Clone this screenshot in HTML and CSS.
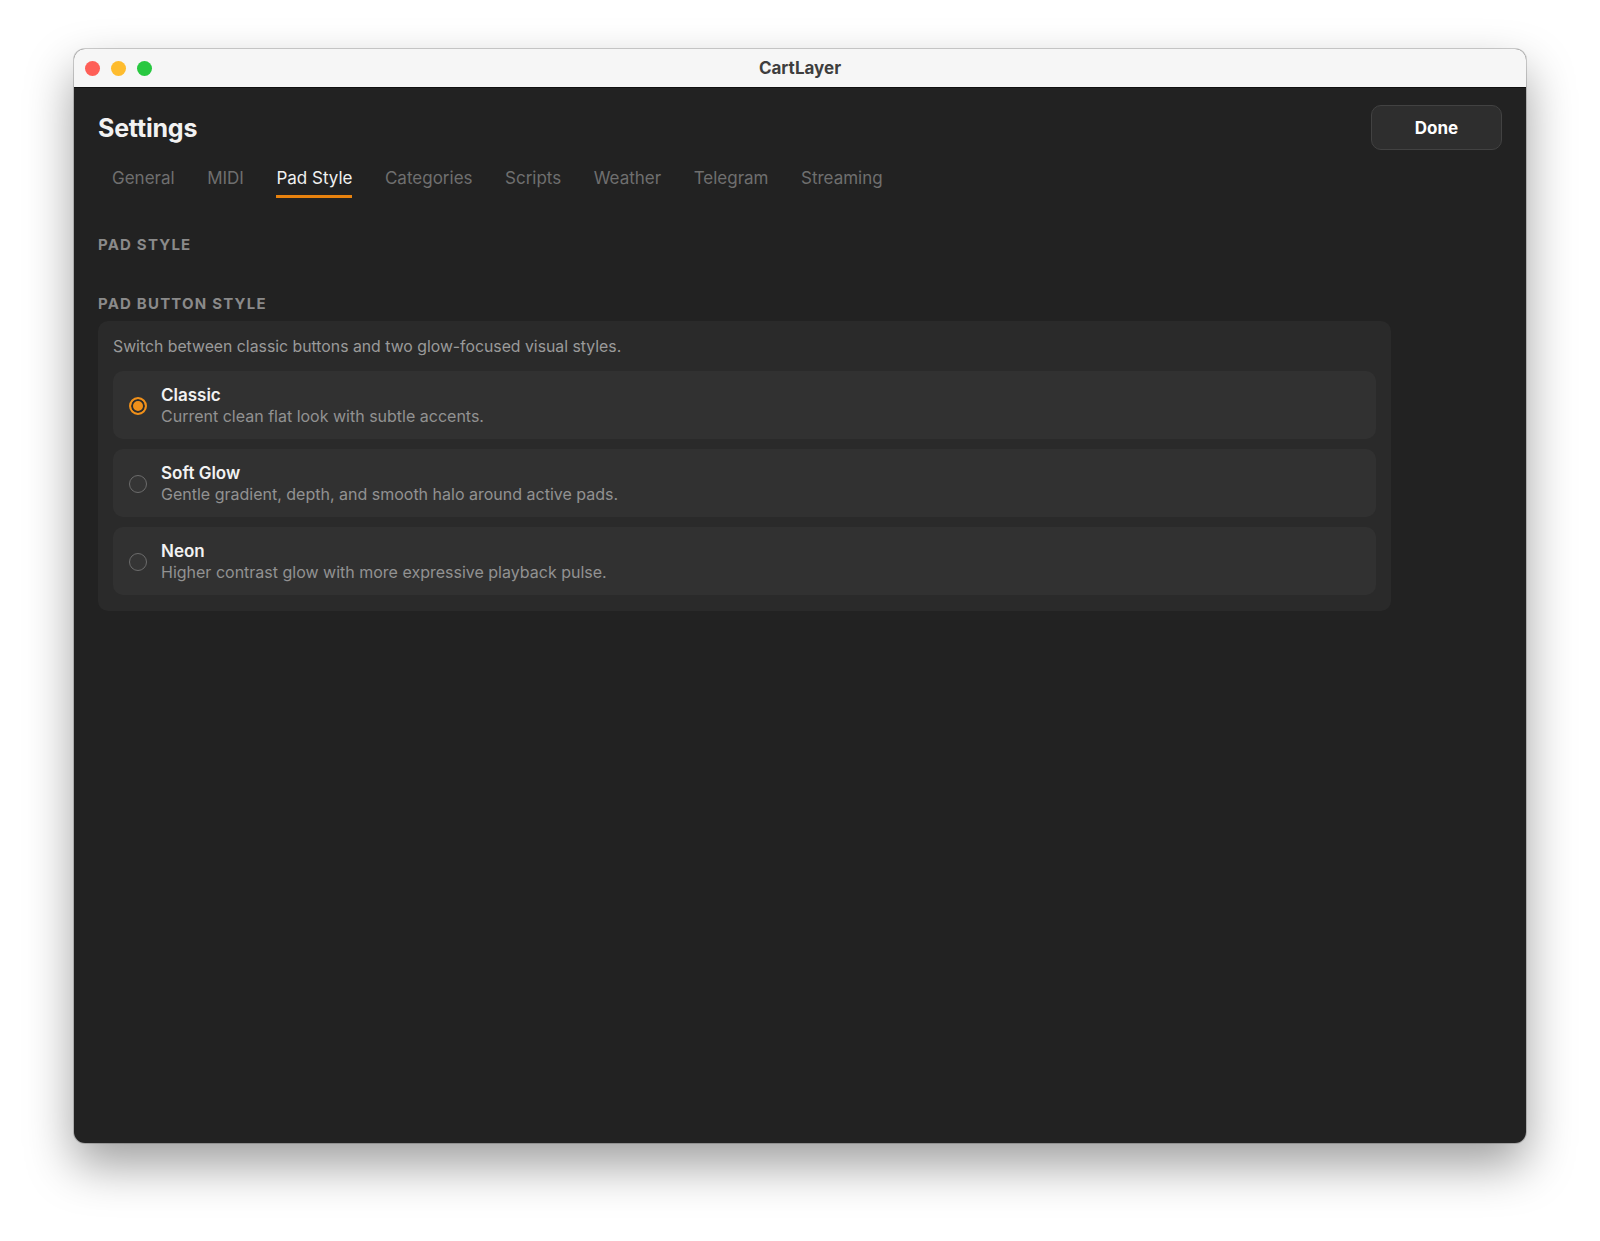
FILE: index.html
```html
<!DOCTYPE html>
<html lang="en">
<head>
    <meta charset="UTF-8">
    <title>CartLayer - Settings</title>
    <link rel="stylesheet" href="styles.css">
</head>
<body>
    <div class="window">
        <div class="titlebar">
            <div class="lights">
                <span class="light red"></span>
                <span class="light yellow"></span>
                <span class="light green"></span>
            </div>
            <div class="title">CartLayer</div>
        </div>
        <div class="content">
            <div class="header">
                <h1>Settings</h1>
                <button class="done">Done</button>
            </div>
            <nav class="tabs">
                <span class="tab">General</span>
                <span class="tab">MIDI</span>
                <span class="tab active">Pad Style</span>
                <span class="tab">Categories</span>
                <span class="tab">Scripts</span>
                <span class="tab">Weather</span>
                <span class="tab">Telegram</span>
                <span class="tab">Streaming</span>
            </nav>

            <h2 class="section-title">Pad Style</h2>

            <h3 class="group-title">Pad Button Style</h3>
            <div class="card">
                <p class="card-desc">Switch between classic buttons and two glow-focused visual styles.</p>
                <div class="option selected">
                    <span class="radio"></span>
                    <div class="option-text">
                        <div class="option-name">Classic</div>
                        <div class="option-sub">Current clean flat look with subtle accents.</div>
                    </div>
                </div>
                <div class="option">
                    <span class="radio"></span>
                    <div class="option-text">
                        <div class="option-name">Soft Glow</div>
                        <div class="option-sub">Gentle gradient, depth, and smooth halo around active pads.</div>
                    </div>
                </div>
                <div class="option">
                    <span class="radio"></span>
                    <div class="option-text">
                        <div class="option-name">Neon</div>
                        <div class="option-sub">Higher contrast glow with more expressive playback pulse.</div>
                    </div>
                </div>
            </div>
        </div>
    </div>
</body>
</html>
```

FILE: styles.css
```css
body {
    margin: 0;
    padding: 49px 0 98px 74px;
    background-color: #fff;
    font-family: Inter, "Noto Sans", sans-serif;
}

.window {
    width: 1452px;
    height: 1094px;
    border-radius: 11px;
    overflow: hidden;
    display: flex;
    flex-direction: column;
    background-color: #222;
    box-shadow: 0 0 0 1px rgba(0, 0, 0, 0.18), 0 22px 48px rgba(0, 0, 0, 0.38);
}

.titlebar {
    position: relative;
    height: 38px;
    background-color: #f6f6f6;
    border-bottom: 1px solid #111;
    display: flex;
    align-items: center;
    justify-content: center;
}

.lights {
    position: absolute;
    left: 11px;
    top: 12px;
    display: flex;
    gap: 11px;
}

.light {
    width: 15px;
    height: 15px;
    border-radius: 50%;
}

    .light.red {
        background-color: #fe5f57;
    }

    .light.yellow {
        background-color: #febc2e;
    }

    .light.green {
        background-color: #28c840;
    }

.title {
    font-size: 17px;
    font-weight: 700;
    color: #3e3e3e;
}

.content {
    flex: 1;
    padding: 17px 24px 0 24px;
}

.header {
    display: flex;
    align-items: center;
    justify-content: space-between;
    height: 45px;
}

    .header h1 {
        margin: 0;
        font-size: 25px;
        font-weight: 700;
        color: #f2f2f2;
        letter-spacing: -0.2px;
    }

.done {
    width: 131px;
    height: 45px;
    border-radius: 10px;
    border: 1px solid #424242;
    background-color: #2e2e2e;
    color: #fff;
    font-family: inherit;
    font-size: 17px;
    font-weight: 700;
}

.tabs {
    display: flex;
    gap: 32.5px;
    padding-left: 14px;
    margin-top: 17px;
}

.tab {
    font-size: 17px;
    line-height: 22px;
    color: #6f6f6f;
    padding-bottom: 6px;
    border-bottom: 3px solid transparent;
}

    .tab.active {
        color: #f0f0f0;
        border-bottom-color: #e8820e;
    }

.section-title,
.group-title {
    margin: 0;
    font-size: 15px;
    line-height: 18px;
    font-weight: 700;
    text-transform: uppercase;
    letter-spacing: 1.2px;
    color: #8a8a8a;
}

.section-title {
    margin-top: 38px;
}

.group-title {
    margin-top: 41px;
    margin-bottom: 8px;
}

.card {
    width: 1263px;
    background-color: #2a2a2a;
    border-radius: 10px;
    padding: 16px 15px 16px 15px;
    display: flex;
    flex-direction: column;
    gap: 10px;
}

.card-desc {
    margin: 0 0 4px 0;
    font-size: 15.8px;
    line-height: 20px;
    color: #9a9a9a;
}

.option {
    display: flex;
    align-items: center;
    gap: 14px;
    background-color: #313131;
    border-radius: 10px;
    padding: 14px 16px 13px 16px;
}

.radio {
    box-sizing: border-box;
    width: 18px;
    height: 18px;
    border-radius: 50%;
    border: 1.5px solid #6c6c6c;
    background-color: #353535;
    flex-shrink: 0;
}

    .option.selected .radio {
        border: 2px solid #f0901a;
        background-color: #f0901a;
        box-shadow: inset 0 0 0 2px #2c2c2c;
    }

.option-name {
    font-size: 17px;
    line-height: 21px;
    font-weight: 600;
    color: #f2f2f2;
}

.option-sub {
    font-size: 16px;
    line-height: 20px;
    color: #929292;
}
```
